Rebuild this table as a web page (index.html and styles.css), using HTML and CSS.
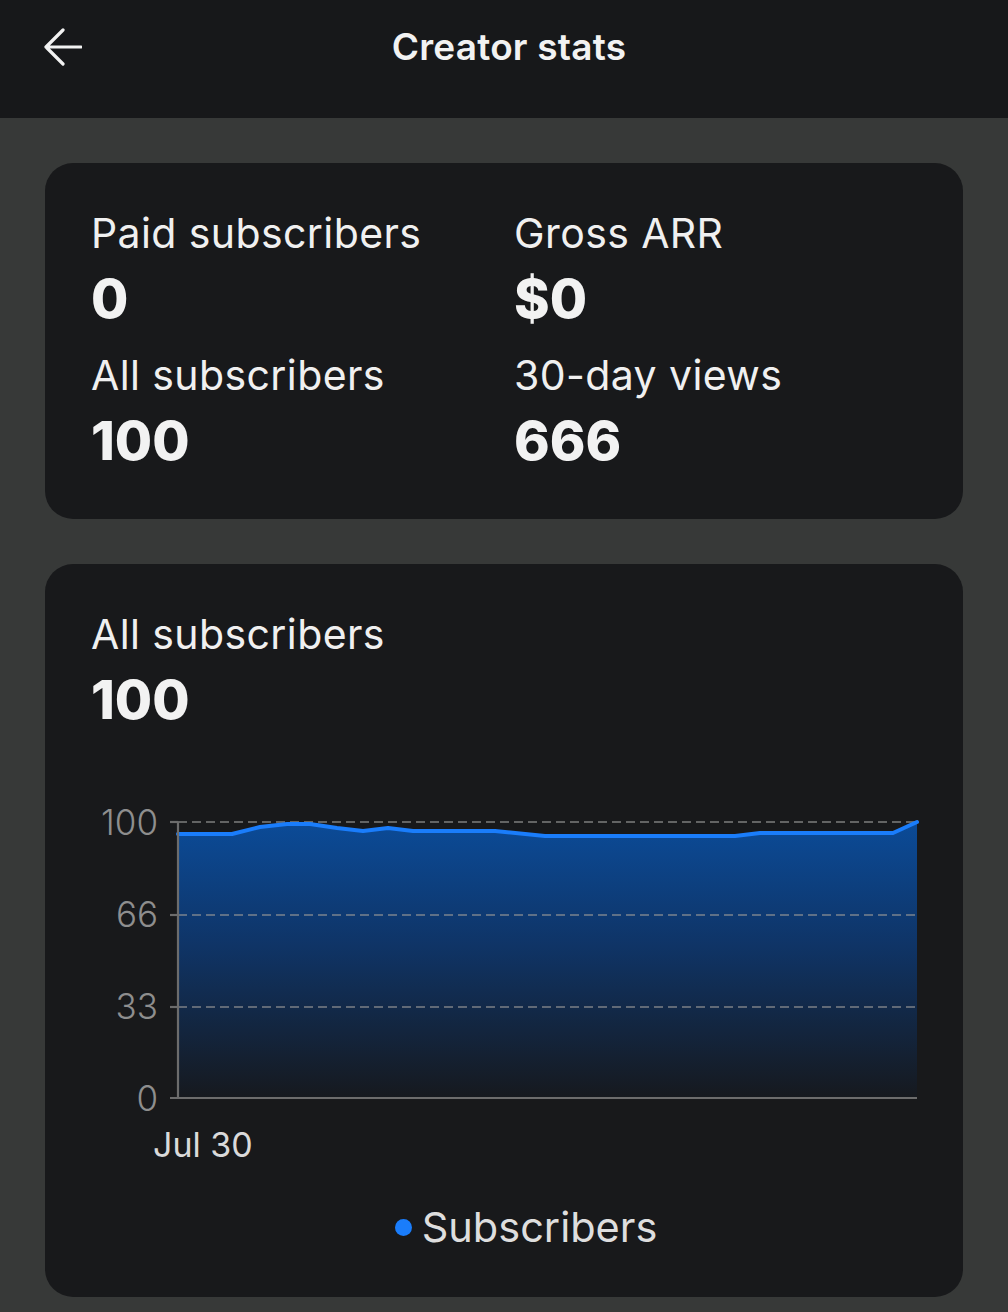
FILE: index.html
```html
<!DOCTYPE html>
<html lang="en">
<head>
<meta charset="utf-8">
<title>Creator stats</title>
<link rel="stylesheet" href="styles.css">
</head>
<body>
<header class="topbar">
  <div class="topbar-left">
    <svg class="back-icon" width="38" height="38" viewBox="0 0 38 38" aria-hidden="true">
      <path d="M19 2 L2 19 L19 36 M2 19 L37 19" fill="none" stroke="#f2f2f2" stroke-width="3.2" stroke-linecap="round" stroke-linejoin="round"/>
    </svg>
  </div>
  <h1 class="topbar-title">Creator stats</h1>
  <div class="topbar-right"></div>
</header>

<main class="page">
  <section class="card stats-card">
    <div class="stat">
      <div class="stat-label">Paid subscribers</div>
      <div class="stat-value">0</div>
    </div>
    <div class="stat">
      <div class="stat-label">Gross ARR</div>
      <div class="stat-value">$0</div>
    </div>
    <div class="stat">
      <div class="stat-label">All subscribers</div>
      <div class="stat-value">100</div>
    </div>
    <div class="stat">
      <div class="stat-label">30-day views</div>
      <div class="stat-value">666</div>
    </div>
  </section>

  <section class="card chart-card">
    <div class="stat-label">All subscribers</div>
    <div class="stat-value">100</div>

    <svg class="chart" width="826" height="365" viewBox="0 0 826 365">
      <defs>
        <linearGradient id="areaFill" x1="0" y1="0" x2="0" y2="1">
          <stop offset="0" stop-color="#0b4b98"/>
          <stop offset="0.45" stop-color="#0f3466"/>
          <stop offset="1" stop-color="#16191e"/>
        </linearGradient>
      </defs>
      <polygon fill="url(#areaFill)" points="87,34 141,34 169,27 196,24 219,24 246,28 272,31 297,28 322,31 404,31 454,36 644,36 669,33 802,33 826,22 826,298 87,298"/>
      <g class="grid">
        <line x1="87" y1="22" x2="826" y2="22"/>
        <line x1="87" y1="115" x2="826" y2="115"/>
        <line x1="87" y1="207" x2="826" y2="207"/>
      </g>
      <polyline class="series" fill="none" points="87,34 141,34 169,27 196,24 219,24 246,28 272,31 297,28 322,31 404,31 454,36 644,36 669,33 802,33 826,22"/>
      <g class="axis">
        <line x1="87" y1="22" x2="87" y2="298"/>
        <line x1="79" y1="298" x2="826" y2="298"/>
        <line x1="79" y1="22" x2="87" y2="22"/>
        <line x1="79" y1="115" x2="87" y2="115"/>
        <line x1="79" y1="207" x2="87" y2="207"/>
      </g>
      <g class="ylabels">
        <text x="67" y="35">100</text>
        <text x="67" y="127">66</text>
        <text x="67" y="219">33</text>
        <text x="67" y="311">0</text>
      </g>
      <text class="xlabel" x="62" y="357">Jul 30</text>
    </svg>

    <div class="legend">
      <span class="legend-dot"></span>
      <span class="legend-text">Subscribers</span>
    </div>
  </section>
</main>
</body>
</html>
```

FILE: styles.css
```css
* {
  box-sizing: border-box;
}

html, body {
  margin: 0;
  padding: 0;
}

body {
  background: #373938;
  font-family: Inter, "Noto Sans", "Liberation Sans", sans-serif;
  color: #f0f0f0;
  min-height: 1312px;
}

.topbar {
  height: 118px;
  background: #17181a;
  display: grid;
  grid-template-columns: 1fr auto 1fr;
  align-items: center;
}

.topbar-left {
  padding-left: 44px;
  display: flex;
  align-items: center;
  padding-bottom: 24px;
}

.back-icon {
  display: block;
}

.topbar-title {
  margin: 0;
  font-size: 37px;
  line-height: 44px;
  font-weight: 600;
  color: #f2f2f2;
  letter-spacing: 0.2px;
  padding-bottom: 24px;
  padding-left: 10px;
}

.page {
  padding: 45px;
  display: flex;
  flex-direction: column;
  gap: 45px;
}

.card {
  background: #18191b;
  border-radius: 28px;
  padding: 46px;
}

.stats-card {
  display: grid;
  grid-template-columns: 1fr 1fr;
  column-gap: 20px;
  row-gap: 20px;
}

.stat {
  display: flex;
  flex-direction: column;
  gap: 10px;
}

.stat-label {
  font-size: 41px;
  line-height: 48px;
  font-weight: 400;
  letter-spacing: 0.4px;
  color: #f0f0f0;
}

.stat-value {
  font-size: 54px;
  line-height: 64px;
  font-weight: 800;
  color: #f2f2f2;
}

.chart-card {
  display: flex;
  flex-direction: column;
}

.chart-card .stat-value {
  margin-top: 10px;
}

.chart {
  display: block;
  margin-top: 68px;
  overflow: visible;
}

.grid line {
  stroke: rgba(150, 150, 150, 0.6);
  stroke-width: 2.2;
  stroke-dasharray: 9 5;
}

.series {
  stroke: #1a7dfb;
  stroke-width: 4;
  stroke-linejoin: round;
  stroke-linecap: round;
}

.axis line {
  stroke: #6c6c6c;
  stroke-width: 2.2;
}

.ylabels text {
  font-family: Inter, "Noto Sans", sans-serif;
  font-size: 35px;
  font-weight: 300;
  fill: #8e8e8e;
  text-anchor: end;
}

.xlabel {
  font-family: Inter, "Noto Sans", sans-serif;
  font-size: 34px;
  font-weight: 400;
  fill: #dadada;
}

.legend {
  margin-top: 38px;
  display: flex;
  justify-content: center;
  align-items: center;
  gap: 10px;
  padding-left: 44px;
}

.legend-dot {
  width: 17px;
  height: 17px;
  border-radius: 50%;
  background: #1a7dfb;
}

.legend-text {
  font-size: 41.5px;
  line-height: 48px;
  color: #dedede;
}
```
